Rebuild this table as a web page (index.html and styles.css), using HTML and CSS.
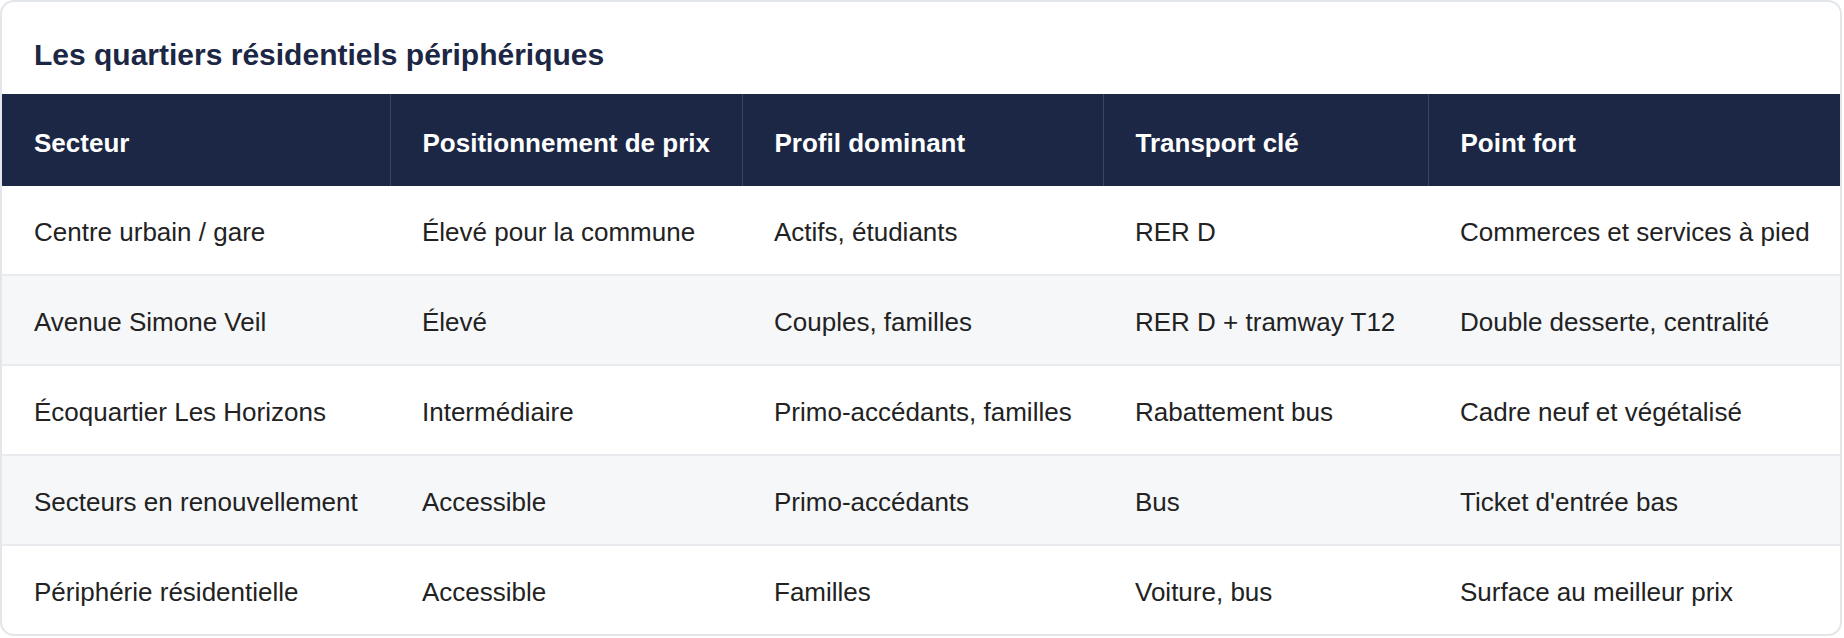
FILE: index.html
```html
<!DOCTYPE html>
<html lang="fr">
<head>
<meta charset="utf-8">
<title>Les quartiers résidentiels périphériques</title>
<link rel="stylesheet" href="styles.css">
</head>
<body>
<section class="card">
  <h2 class="card-title">Les quartiers résidentiels périphériques</h2>
  <table class="data">
    <colgroup>
      <col class="c1"><col class="c2"><col class="c3"><col class="c4"><col class="c5">
    </colgroup>
    <thead>
      <tr>
        <th>Secteur</th>
        <th>Positionnement de prix</th>
        <th>Profil dominant</th>
        <th>Transport clé</th>
        <th>Point fort</th>
      </tr>
    </thead>
    <tbody>
      <tr>
        <td>Centre urbain / gare</td>
        <td>Élevé pour la commune</td>
        <td>Actifs, étudiants</td>
        <td>RER D</td>
        <td>Commerces et services à pied</td>
      </tr>
      <tr>
        <td>Avenue Simone Veil</td>
        <td>Élevé</td>
        <td>Couples, familles</td>
        <td>RER D + tramway T12</td>
        <td>Double desserte, centralité</td>
      </tr>
      <tr>
        <td>Écoquartier Les Horizons</td>
        <td>Intermédiaire</td>
        <td>Primo-accédants, familles</td>
        <td>Rabattement bus</td>
        <td>Cadre neuf et végétalisé</td>
      </tr>
      <tr>
        <td>Secteurs en renouvellement</td>
        <td>Accessible</td>
        <td>Primo-accédants</td>
        <td>Bus</td>
        <td>Ticket d'entrée bas</td>
      </tr>
      <tr>
        <td>Périphérie résidentielle</td>
        <td>Accessible</td>
        <td>Familles</td>
        <td>Voiture, bus</td>
        <td>Surface au meilleur prix</td>
      </tr>
    </tbody>
  </table>
</section>
</body>
</html>
```

FILE: styles.css
```css
* { box-sizing: border-box; }

html, body {
  margin: 0;
  padding: 0;
  background: #ffffff;
}

body {
  font-family: "Liberation Sans", Arial, Helvetica, sans-serif;
  color: #222222;
}

.card {
  width: 1842px;
  border: 2px solid #e3e6ea;
  border-radius: 14px;
  overflow: hidden;
  background: #ffffff;
}

.card-title {
  margin: 0;
  padding: 36px 32px 22px 32px;
  font-size: 30px;
  line-height: 34px;
  font-weight: 700;
  color: #1b2744;
}

.data {
  width: 100%;
  table-layout: fixed;
  border-collapse: collapse;
  border-spacing: 0;
}

.c1 { width: 388px; }
.c2 { width: 352px; }
.c3 { width: 361px; }
.c4 { width: 325px; }
.c5 { width: auto; }

.data th {
  background: #1b2744;
  color: #ffffff;
  font-size: 26px;
  line-height: 30px;
  font-weight: 700;
  text-align: left;
  padding: 34px 32px 28px 32px;
  border-right: 1px solid #3a4868;
  white-space: nowrap;
}

.data th:last-child { border-right: none; }

.data td {
  font-size: 26px;
  line-height: 30px;
  padding: 31px 32px 27px 32px;
  color: #222222;
  white-space: nowrap;
  border-bottom: 2px solid #e9ebee;
}

.data tbody tr:nth-child(even) td { background: #f6f7f9; }

.data tbody tr:last-child td { border-bottom: none; }
```
